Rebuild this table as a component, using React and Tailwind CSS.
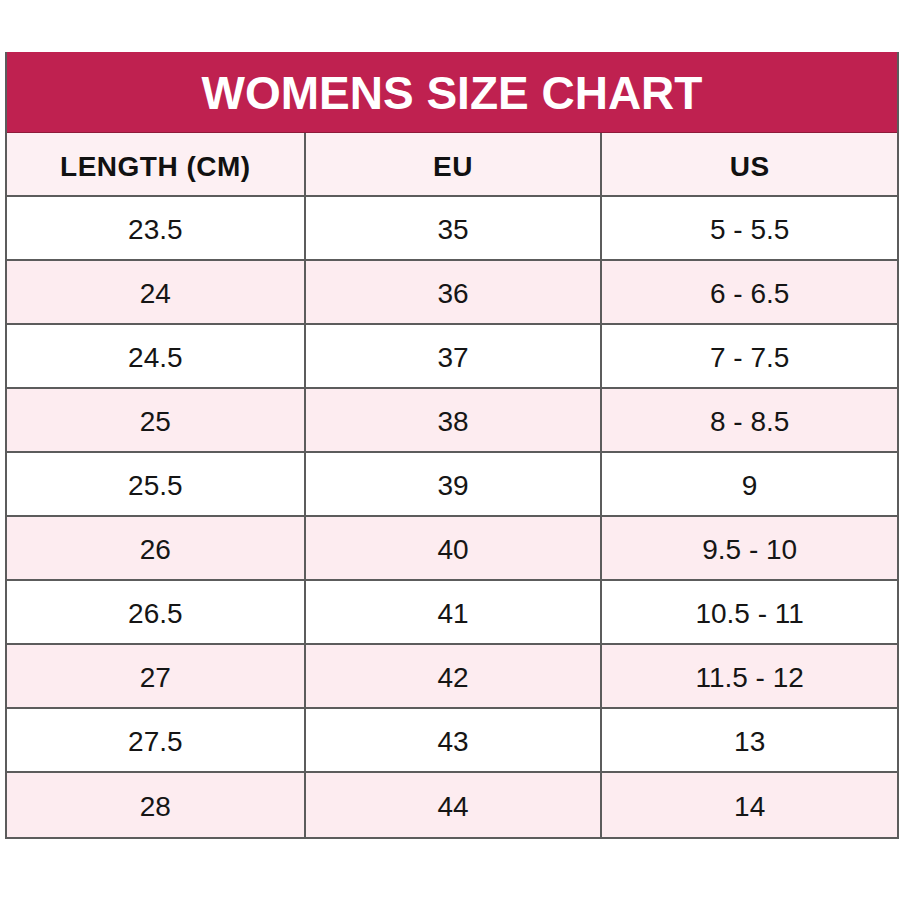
import React from "react";

const rows = [
  ["23.5", "35", "5 - 5.5"],
  ["24", "36", "6 - 6.5"],
  ["24.5", "37", "7 - 7.5"],
  ["25", "38", "8 - 8.5"],
  ["25.5", "39", "9"],
  ["26", "40", "9.5 - 10"],
  ["26.5", "41", "10.5 - 11"],
  ["27", "42", "11.5 - 12"],
  ["27.5", "43", "13"],
  ["28", "44", "14"],
];

const headers = ["LENGTH (CM)", "EU", "US"];

const App = () => {
  return (
    <div className="w-[900px] h-[900px] bg-white pt-[52px] pl-[5px]" style={{ fontFamily: '"Liberation Sans", Arial, sans-serif' }}>
      <div className="w-[894px] border-x-2 border-b-2 border-[#5c5c5c]">
        {/* Title banner */}
        <div className="h-[81px] bg-[#bf2150] flex items-center justify-center border-b border-[#8e1a3a]">
          <h1 className="text-[46px] font-bold text-white leading-none pt-[1px]">WOMENS SIZE CHART</h1>
        </div>

        {/* Column headers */}
        <div className="grid grid-cols-3 bg-[#fdf0f3]">
          {headers.map((h, i) => (
            <div
              key={h}
              className={`h-[64px] pt-[5px] flex items-center justify-center border-b-2 border-[#5c5c5c] text-[28px] tracking-[0.5px] font-bold text-[#111] ${i > 0 ? "border-l-2" : ""}`}
            >
              {h}
            </div>
          ))}
        </div>

        {/* Data rows */}
        {rows.map((row, idx) => (
          <div key={idx} className={`grid grid-cols-3 ${idx % 2 === 1 ? "bg-[#fdecf0]" : "bg-white"}`}>
            {row.map((cell, i) => (
              <div
                key={i}
                className={`h-[64px] pt-[4px] flex items-center justify-center text-[28px] text-[#151515] ${idx < rows.length - 1 ? "border-b-2" : ""} border-[#5c5c5c] ${i > 0 ? "border-l-2" : ""}`}
              >
                {cell}
              </div>
            ))}
          </div>
        ))}
      </div>
    </div>
  );
};

export default App;
